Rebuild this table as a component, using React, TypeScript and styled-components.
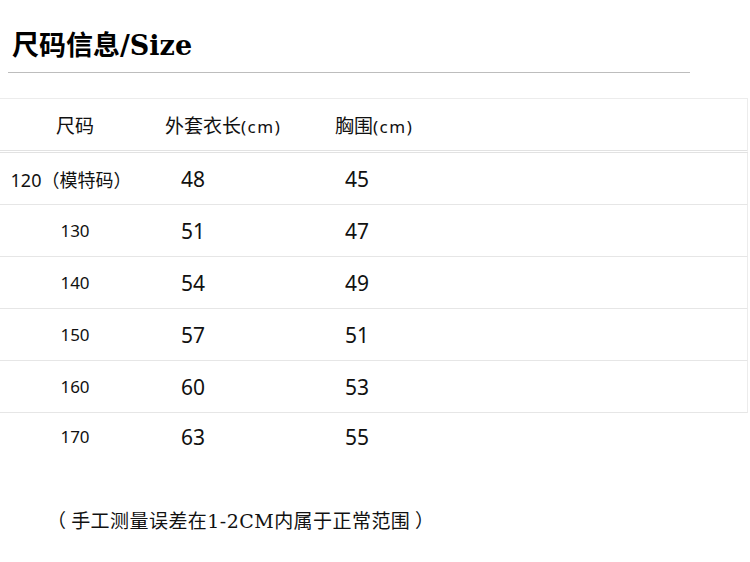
import styled, { createGlobalStyle } from 'styled-components';

const GlobalStyle = createGlobalStyle`
  body {
    margin: 0;
    background: #fff;
    color: #111;
    font-family: "Noto Sans", "Noto Sans CJK SC", sans-serif;
  }
`;

const rows = [
  { size: '120（模特码）', length: '48', chest: '45' },
  { size: '130', length: '51', chest: '47' },
  { size: '140', length: '54', chest: '49' },
  { size: '150', length: '57', chest: '51' },
  { size: '160', length: '60', chest: '53' },
  { size: '170', length: '63', chest: '55' },
];

const App = () => {
  return (
    <Page>
      <GlobalStyle />
      <Title>
        尺码信息<Latin>/Size</Latin>
      </Title>
      <Divider />

      <Table>
        <HeadRow>
          <SizeCell head>尺码</SizeCell>
          <HeadCell pad={15}>
            外套衣长<Unit>(cm)</Unit>
          </HeadCell>
          <HeadCell pad={15}>
            胸围<Unit>(cm)</Unit>
          </HeadCell>
        </HeadRow>
        {rows.map((r, i) => (
          <Row key={r.size} last={i === rows.length - 1}>
            <SizeCell wide={i === 0}>{r.size}</SizeCell>
            <NumCell pad={31}>{r.length}</NumCell>
            <NumCell pad={25}>{r.chest}</NumCell>
          </Row>
        ))}
      </Table>

      <Note>
        （ 手工测量误差在<Latin>1-2CM</Latin>内属于正常范围 ）
      </Note>
    </Page>
  );
};

const Page = styled.div`
  width: 750px;
  height: 562px;
  overflow: hidden;
`;

const Title = styled.h1`
  margin: 0;
  padding: 27px 0 0 12px;
  height: 35px;
  font-family: "Noto Sans CJK SC", sans-serif;
  font-size: 27px;
  line-height: 33px;
  font-weight: 700;
  color: #000;
`;

const Latin = styled.span`
  font-family: "DejaVu Serif", "Liberation Serif", serif;
`;

const Divider = styled.div`
  margin: 10px 0 0 8px;
  width: 682px;
  height: 1px;
  background: #bdbdbd;
`;

const Table = styled.div`
  margin-top: 25px;
  width: 748px;
`;

const Row = styled.div<{ last?: boolean }>`
  display: grid;
  grid-template-columns: 150px 170px 1fr;
  align-items: center;
  height: ${(p) => (p.last ? 47 : 51)}px;
  border-bottom: ${(p) => (p.last ? 'none' : '1px solid #e6e6e6')};
  border-right: ${(p) => (p.last ? 'none' : '1px solid #ececec')};
`;

const HeadRow = styled(Row)`
  border-top: 1px solid #ececec;
  border-bottom: 3px double #e2e2e2;
`;

const SizeCell = styled.div<{ wide?: boolean; head?: boolean }>`
  text-align: center;
  font-size: ${(p) => (p.head ? 19 : p.wide ? 18 : 17)}px;
  padding-right: ${(p) => (p.wide ? 8 : 0)}px;
  white-space: nowrap;
`;

const HeadCell = styled.div<{ pad: number }>`
  padding-left: ${(p) => p.pad}px;
  font-size: 19px;
  white-space: nowrap;
`;

const Unit = styled.span`
  font-size: 17px;
  letter-spacing: 1.5px;
`;

const NumCell = styled.div<{ pad: number }>`
  padding-left: ${(p) => p.pad}px;
  font-size: 21px;
`;

const Note = styled.div`
  margin-top: 48px;
  padding-left: 47px;
  font-family: "Noto Sans CJK SC", sans-serif;
  font-size: 19px;
  line-height: 24px;
  letter-spacing: 0.45px;
  white-space: pre;
`;

export default App;
